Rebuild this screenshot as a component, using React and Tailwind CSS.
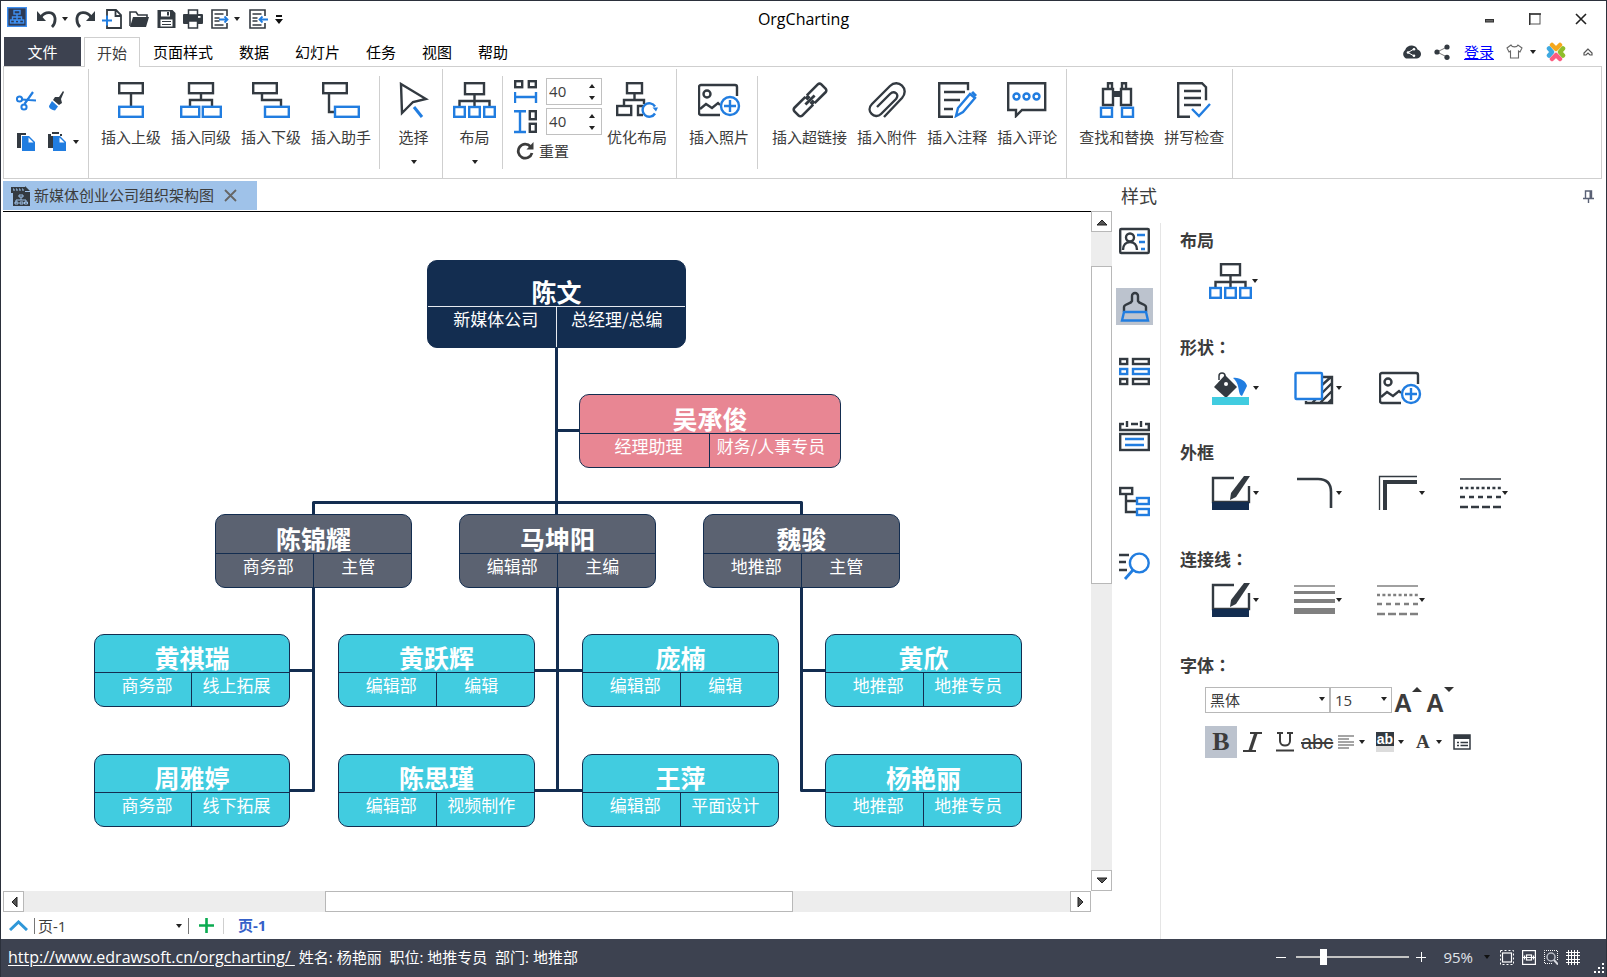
import React from "react";

const D = "#333a41";
const B = "#217de0";

function Svg({ w, h, children, sw = 2.4, stroke = D, className = "" }) {
  return (
    <svg
      width={w}
      height={h}
      viewBox={`0 0 ${w} ${h}`}
      fill="none"
      stroke={stroke}
      strokeWidth={sw}
      className={`block shrink-0 ${className}`}
      aria-hidden="true"
    >
      {children}
    </svg>
  );
}

function Caret({ color = "#222", className = "" }) {
  return (
    <svg width="6" height="4" viewBox="0 0 6 4" className={`block shrink-0 ${className}`} aria-hidden="true">
      <path d="M0 0h6L3 4z" fill={color} />
    </svg>
  );
}

/* ---------- quick access icons ---------- */

const LogoIcon = () => (
  <Svg w={20} h={20} sw={1.4} stroke="#3f8ff0">
    <rect x="0" y="0" width="20" height="20" fill="#2d3a55" stroke="none" />
    <rect x="0.7" y="0.7" width="18.6" height="18.6" />
    <rect x="7" y="3.5" width="6" height="3.5" />
    <path d="M10 7v7M5.5 13v-3h9v3" />
    <rect x="3.5" y="13" width="4" height="3" />
    <rect x="8.3" y="13" width="3.4" height="3" />
    <rect x="12.6" y="13" width="4" height="3" />
  </Svg>
);
const UndoIcon = () => (
  <Svg w={20} h={20}>
    <path d="M4 8c4-6 13-6 14 1 .4 4-1 7-3 9" strokeWidth="2.8" />
    <path d="M0 2v10h9z" fill={D} stroke="none" />
  </Svg>
);
const RedoIcon = () => (
  <Svg w={20} h={20}>
    <path d="M16 8C12 2 3 2 2 9c-.4 4 1 7 3 9" strokeWidth="2.8" />
    <path d="M20 2v10h-9z" fill={D} stroke="none" />
  </Svg>
);
const NewIcon = () => (
  <Svg w={20} h={20} sw={1.8}>
    <path d="M5 7V1h9l5 5v13H5v-4M13.500 1v6H19" />
    <path d="M0 11.500h10M5 6.500v10" stroke={B} strokeWidth="2" />
  </Svg>
);
const OpenIcon = () => (
  <Svg w={20} h={20}>
    <path d="M1 17V3h6l2 3h9v3" strokeWidth="1.600" />
    <path d="M4 8h16l-3 10H1z" fill={D} stroke="none" />
  </Svg>
);
const SaveIcon = () => (
  <Svg w={20} h={20}>
    <path d="M1.500 1h15l3 3v15h-18z" fill={D} stroke="none" />
    <rect x="5" y="2.500" width="9" height="5" fill="#fff" stroke="none" />
    <rect x="11" y="3" width="2" height="3.500" fill={D} stroke="none" />
    <rect x="4.500" y="10.500" width="12" height="7" fill="#fff" stroke="none" />
    <path d="M6 12.500h9M6 15.500h9" strokeWidth="1.200" />
  </Svg>
);
const PrintIcon = () => (
  <Svg w={20} h={20}>
    <rect x="0" y="5" width="20" height="10" rx="1" fill={D} stroke="none" />
    <rect x="5.500" y="1" width="9" height="5" fill="#fff" strokeWidth="1.500" />
    <rect x="5.500" y="12" width="9" height="7" fill="#fff" strokeWidth="1.500" />
    <rect x="15" y="7" width="2.500" height="1.800" fill="#fff" stroke="none" />
  </Svg>
);
const ExportIcon = ({ back }) => (
  <Svg w={20} h={20} sw={1.6}>
    <path d="M17 7V1H2v18h15v-5" />
    <path d="M4.500 5h9M4.500 9h5M4.500 12h5M4.500 16h9" strokeWidth="1.300" />
    <path d={back ? "M20 10.500h-8M14.500 7.500l-3 3 3 3" : "M9 10.500h8M14.500 7.500l3 3-3 3"} stroke={B} strokeWidth="1.800" />
  </Svg>
);

/* ---------- clipboard icons ---------- */

const CutIcon = () => (
  <Svg w={20} h={20} stroke={B} sw={2}>
    <circle cx="3.500" cy="8" r="2.600" />
    <circle cx="8" cy="16" r="2.600" />
    <path d="M6 8.500L20 9.500M8.500 13L17 1" strokeWidth="2.200" />
  </Svg>
);
const BrushIcon = () => (
  <Svg w={20} h={20} stroke="none">
    <path d="M16 0l1 1-3 7 1 4-3 2-6-5 2-3 4 0z" fill={D} />
    <path d="M5 10l6 5.500-3 4c-3-.5-6-2-6-4.500z" fill={B} />
  </Svg>
);
const CopyIcon = () => (
  <Svg w={20} h={20} stroke="none">
    <path d="M1 1h9v2H5v13H1z" fill={D} />
    <path d="M6 4h7l6 6v9H6z" fill={B} />
    <path d="M12.500 5.500v5h5z" fill="#fff" />
  </Svg>
);
const PasteIcon = () => (
  <Svg w={20} h={20} stroke="none">
    <path d="M1 2h3v2h2v12H1zM5 0h7v2H5zM13 2h2v2h-2z" fill={D} />
    <path d="M6 4h7l6 6v9H6z" fill={B} />
    <path d="M12.500 5.500v5h5z" fill="#fff" />
  </Svg>
);

/* ---------- ribbon icons ---------- */

const ParentIcon = () => (
  <Svg w={26} h={36}>
    <rect x="1.200" y="1.200" width="23.600" height="10" />
    <path d="M13 11v13" />
    <rect x="1.200" y="24.800" width="23.600" height="10" stroke={B} />
  </Svg>
);
const SiblingIcon = () => (
  <Svg w={42} h={36}>
    <rect x="9" y="1.200" width="24" height="10" />
    <path d="M21 11v7M10 24v-6h22v6" />
    <rect x="1.200" y="24.800" width="18" height="10" stroke={B} />
    <rect x="22.800" y="24.800" width="18" height="10" stroke={B} />
  </Svg>
);
const ChildIcon = () => (
  <Svg w={38} h={36}>
    <rect x="1.200" y="1.200" width="23.600" height="10" />
    <path d="M10 11v7h19v6" />
    <rect x="13" y="24.800" width="23.800" height="10" stroke={B} />
  </Svg>
);
const AssistantIcon = () => (
  <Svg w={38} h={36}>
    <rect x="1.200" y="1.200" width="23.600" height="10" />
    <path d="M7 11v19h7" />
    <rect x="13" y="24.800" width="23.800" height="10" stroke={B} />
  </Svg>
);
const SelectIcon = () => (
  <Svg w={30} h={36}>
    <path d="M2 2l25 15-13 3L3 31z" />
    <path d="M15 25l8 10" stroke={B} strokeWidth="3" />
  </Svg>
);
const LayoutIcon = () => (
  <Svg w={43} h={36}>
    <rect x="12" y="1.200" width="19" height="11" />
    <path d="M21.500 12v12M6.500 24v-5h30v5" />
    <rect x="1.200" y="25" width="10.600" height="9.800" stroke={B} />
    <rect x="16.200" y="25" width="10.600" height="9.800" stroke={B} />
    <rect x="31.200" y="25" width="10.600" height="9.800" stroke={B} />
  </Svg>
);
const HSpaceIcon = () => (
  <Svg w={24} h={24}>
    <rect x="1.200" y="1.200" width="7" height="6" />
    <rect x="14.800" y="1.200" width="7" height="6" />
    <path d="M1 12v11M22 12v11M1 17h21" stroke={B} />
  </Svg>
);
const VSpaceIcon = () => (
  <Svg w={24} h={24}>
    <rect x="15.800" y="1.200" width="6" height="8" />
    <rect x="15.800" y="13.800" width="6" height="8" />
    <path d="M0 1.200h12M0 22h12M6 1v21" stroke={B} />
  </Svg>
);
const ResetIcon = () => (
  <Svg w={18} h={18} sw={2.8} stroke="#3c3c3c">
    <path d="M14.500 4.500A7 7 0 1 0 16 11" />
    <path d="M17.500 0v7.500h-7z" fill="#3c3c3c" stroke="none" />
  </Svg>
);
const OptimizeIcon = () => (
  <Svg w={42} h={36}>
    <rect x="11" y="1.200" width="15" height="10" />
    <path d="M18.500 11v7M8 24v-6h20v4" />
    <rect x="1.200" y="24" width="14" height="9" />
    <path d="M28 24h-6v9h5" />
    <path d="M39 24.500a6.700 6.700 0 1 0 0 7" stroke={B} />
    <path d="M36.500 25.500h5.500l-2 4z" fill={B} stroke="none" />
  </Svg>
);
const PhotoIcon = () => (
  <Svg w={43} h={36}>
    <path d="M22 33H3a2 2 0 0 1-2-2V5a2 2 0 0 1 2-2h34a2 2 0 0 1 2 2v9" />
    <circle cx="9" cy="12" r="3.500" />
    <path d="M2 27l6-5 6 4 6-5 2 2" />
    <circle cx="32" cy="24" r="9" stroke={B} />
    <path d="M26 24h12M32 18v12" stroke={B} />
  </Svg>
);
const LinkIcon = () => (
  <Svg w={36} h={36} sw={2.6}>
    <g transform="rotate(-45 18 18)">
      <path d="M17 12.500H1.500a2.500 2.500 0 0 0-2.500 2.500v6a2.500 2.500 0 0 0 2.500 2.500H17M17 12.500v4M17 23.500v-4" />
      <path d="M19 12.500h15.500a2.500 2.500 0 0 1 2.500 2.500v6a2.500 2.500 0 0 1-2.500 2.500H19M19 12.500v4M19 23.500v-4" />
      <path d="M11.500 18h13" strokeWidth="2.800" />
    </g>
  </Svg>
);
const ClipIcon = () => (
  <Svg w={38} h={36}>
    <path d="M16 35L34 16c8-9-4-20-12-12L4 22c-7 7 3 16 9 10l15-15c4-5-2-9-6-5L9 25" />
  </Svg>
);
const NoteIcon = () => (
  <Svg w={39} h={36}>
    <path d="M15 34.800H1.200V1.200H30v7M6 10h21M6 18h16M6 27h9" />
    <path d="M18 34l2-8 12-14 5 4-12 14z" stroke={B} />
    <path d="M34 10l4 4" stroke={B} strokeWidth="3" />
  </Svg>
);
const CommentIcon = () => (
  <Svg w={40} h={36}>
    <path d="M1.200 1.200h37V28H15l-6 6v-6H1.200z" />
    <g stroke={B}>
      <circle cx="9.500" cy="14.500" r="3" />
      <circle cx="19.500" cy="14.500" r="3" />
      <circle cx="29.500" cy="14.500" r="3" />
    </g>
  </Svg>
);
const FindIcon = () => (
  <Svg w={36} h={36}>
    <path d="M4 7h10v16H4zM22 7h10v16H22zM9 7V1.200h4V7M23 7V1.200h4V7" />
    <rect x="14" y="9" width="8" height="6" fill={D} stroke="none" />
    <rect x="2" y="25.800" width="11" height="9" stroke={B} />
    <rect x="23" y="25.800" width="11" height="9" stroke={B} />
  </Svg>
);
const SpellIcon = () => (
  <Svg w={34} h={36}>
    <path d="M13 34.800H1.200V1.200H25l4 4v13M7 9h17M7 16h17M7 23h17" />
    <path d="M15 27l7 7 11-12" stroke={B} />
  </Svg>
);

/* ---------- style panel icons ---------- */

const CardIcon = () => (
  <Svg w={31} h={31}>
    <rect x="1.200" y="3" width="28.600" height="24" rx="1" />
    <circle cx="11" cy="11.500" r="4" />
    <path d="M4 24c0-5 3-8 7-8s7 3 7 8" />
    <path d="M18 9h8M20 16h6M22 23h4" stroke={B} />
  </Svg>
);
const StyleBrushIcon = () => (
  <Svg w={31} h={31}>
    <path d="M5 21v-5c0-3 7-3 8-6V5a3 3 0 0 1 6 0v5c1 3 8 3 8 6v5" />
    <path d="M5 21h22l2 8.500H3z" stroke={B} />
  </Svg>
);
const ListIcon = () => (
  <Svg w={31} h={31}>
    <rect x="1.200" y="3" width="7" height="5" />
    <rect x="14" y="3" width="15.800" height="5" />
    <rect x="1.200" y="13" width="7" height="5" stroke={B} />
    <rect x="14" y="13" width="15.800" height="5" stroke={B} />
    <rect x="1.200" y="23" width="7" height="5" />
    <rect x="14" y="23" width="15.800" height="5" />
  </Svg>
);
const CalendarIcon = () => (
  <Svg w={31} h={31}>
    <path d="M5 3H1.200v6h28.600V3H26M12 3h7M8 0v6M22 0v6" />
    <rect x="1.200" y="13" width="28.600" height="16" />
    <path d="M6 18h19M6 24h19" stroke={B} />
  </Svg>
);
const TreeIcon = () => (
  <Svg w={31} h={31}>
    <rect x="1.200" y="2" width="12" height="6" />
    <path d="M7 8v18h10M7 15h10" />
    <rect x="18" y="12" width="11.800" height="6" stroke={B} />
    <rect x="18" y="23" width="11.800" height="6" stroke={B} />
  </Svg>
);
const SearchListIcon = () => (
  <Svg w={31} h={31}>
    <path d="M0 4h10M0 11h7M0 19h8" />
    <circle cx="20.300" cy="12" r="9.400" stroke={B} />
    <path d="M14 19L6 28" stroke={B} strokeWidth="2.800" />
  </Svg>
);

const BucketIcon = () => (
  <Svg w={44} h={40} stroke="none">
    <path d="M16 7l12 12-11 11L5 19z" fill={D} />
    <path d="M10 12V8a3 3 0 0 1 6 0v8" fill="none" stroke={D} strokeWidth="1.500" />
    <circle cx="17" cy="16" r="2" fill="#fff" />
    <path d="M24 10c6-1 13 3 14 8l-5 10c-5-2-1-11-9-18z" fill={B} />
    <rect x="3" y="29" width="37" height="8" fill="#41cce0" />
  </Svg>
);
const ShadowIcon = () => (
  <Svg w={44} h={40}>
    <path d="M14 33v2h26V9h-9M20 35l20-20M28 35l12-12M30 17l9-8M36 35l4-4" />
    <rect x="3.500" y="5" width="26.500" height="26" rx="1" stroke={B} fill="#fff" />
  </Svg>
);
const PenIcon = () => (
  <Svg w={44} h={40}>
    <path d="M25 5H4v24h36V13" />
    <path d="M35 3h6L27 24l-6 3 1-7z" fill={D} stroke="none" />
    <rect x="3" y="29" width="37" height="8" fill="#132d50" stroke="none" />
  </Svg>
);
const CornerIcon = () => (
  <Svg w={44} h={40}>
    <path d="M5 6h21q13 0 13 13v16" strokeWidth="2.600" />
  </Svg>
);
const CompoundIcon = () => (
  <Svg w={44} h={40}>
    <path d="M4.500 37V3.500H42" strokeWidth="1.300" />
    <path d="M10 37V9h32" strokeWidth="4" />
  </Svg>
);
const DashIcon = ({ color = D }) => (
  <Svg w={44} h={40} stroke={color}>
    <path d="M2 6h41" strokeWidth="1.500" />
    <path d="M2 15h41" strokeDasharray="3 2.400" strokeWidth="2.600" />
    <path d="M2 24h41" strokeDasharray="5 4" strokeWidth="2.600" />
    <path d="M2 34h41" strokeDasharray="8 3" strokeWidth="2.600" />
  </Svg>
);
const WeightIcon = () => (
  <Svg w={44} h={40} stroke="#808080">
    <path d="M2 6h41" strokeWidth="1.500" />
    <path d="M2 12.500h41" strokeWidth="3" />
    <path d="M2 21h41" strokeWidth="4" />
    <path d="M2 31h41" strokeWidth="6" />
  </Svg>
);

/* ---------- shell ---------- */

function IconButton({ label, className = "", children }) {
  return (
    <button type="button" aria-label={label} className={`flex shrink-0 items-center justify-center ${className}`}>
      {children}
    </button>
  );
}

function TitleBar() {
  return (
    <header className="grid h-9 grid-cols-[1fr_auto_1fr]">
      <div className="flex items-center gap-[7px] pl-1.5">
        <div className="mr-[3px] -mt-1"><LogoIcon /></div>
        <IconButton label="撤销" className="gap-[5px]"><UndoIcon /><Caret /></IconButton>
        <IconButton label="恢复"><RedoIcon /></IconButton>
        <IconButton label="新建"><NewIcon /></IconButton>
        <IconButton label="打开"><OpenIcon /></IconButton>
        <IconButton label="保存"><SaveIcon /></IconButton>
        <IconButton label="打印"><PrintIcon /></IconButton>
        <IconButton label="导出" className="gap-1"><ExportIcon /><Caret /></IconButton>
        <IconButton label="导入" className="ml-px"><ExportIcon back /></IconButton>
        <IconButton label="自定义工具栏">
          <svg width="8" height="9" viewBox="0 0 8 9"><path d="M1 0h6v2H1zM0 4h8L4 9z" fill="#111" /></svg>
        </IconButton>
      </div>
      <h1 className="self-center text-[16px] leading-6 text-black">OrgCharting</h1>
      <div className="flex justify-end pr-0.5">
        <IconButton label="最小化" className="w-[46px]">
          <svg width="9" height="4" viewBox="0 0 9 4" className="mt-1"><rect x="0.500" y="0.500" width="8" height="2.500" fill="#666" stroke="#333" /></svg>
        </IconButton>
        <IconButton label="最大化" className="w-[46px]">
          <svg width="12" height="12" viewBox="0 0 12 12" fill="none"><rect x="1" y="1" width="10" height="10" stroke="#555" /><path d="M0.500 0v12M0 1h12" stroke="#333" strokeWidth="1.500" /></svg>
        </IconButton>
        <IconButton label="关闭" className="w-[46px]">
          <svg width="12" height="12" viewBox="0 0 12 12" fill="none"><path d="M1 1l10 10M11 1L1 11" stroke="#222" strokeWidth="1.600" /></svg>
        </IconButton>
      </div>
    </header>
  );
}

function TabBar() {
  return (
    <nav className="flex h-[29px] justify-between pl-[3px] pr-[13px] text-[15px] leading-7">
      <div className="flex">
        <button type="button" className="mr-[3px] w-[77px] bg-[#3d4250] text-white">文件</button>
        <button type="button" className="relative z-10 -mb-px border border-b-0 border-[#cfcfcf] bg-white px-3 text-[#3c3c3c]">开始</button>
        {["页面样式", "数据", "幻灯片", "任务", "视图", "帮助"].map((t) => (
          <button type="button" key={t} className="px-[13px] text-black">{t}</button>
        ))}
      </div>
      <div className="flex items-center">
        <IconButton label="云分享" className="mr-[13px]">
          <Svg w={20} h={14} stroke="none">
            <path d="M5 13.500a5 5 0 0 1-.8-8.500C5 2 8 .3 11 .5s5 1.800 5.500 4c5 1.500 4.500 8.500-.5 9z" fill={D} />
            <path d="M13 4L7 7.500l6 3.500" fill="none" stroke="#fff" strokeWidth="1" />
            <circle cx="13" cy="4.300" r="1.300" fill="#fff" /><circle cx="7" cy="7.500" r="1.300" fill="#fff" /><circle cx="13" cy="10.700" r="1.300" fill="#fff" />
          </Svg>
        </IconButton>
        <IconButton label="分享" className="mr-3.5">
          <Svg w={16} h={16} sw={1} stroke="#777">
            <path d="M13 3L3 8l10 5" />
            <circle cx="13" cy="3" r="2.600" fill={D} stroke="none" /><circle cx="3" cy="8" r="2.600" fill={D} stroke="none" /><circle cx="13" cy="13.300" r="2.600" fill={D} stroke="none" />
          </Svg>
        </IconButton>
        <a href="#login" className="mr-3 text-[#0000ff] underline">登录</a>
        <IconButton label="皮肤" className="mr-2.5 gap-[7px]">
          <Svg w={17} h={15} sw={1.1} stroke="#666">
            <path d="M5 1L1 4l2 4 1.500-1v7h8V7L14 8l2-4-4-3c-1 2.500-6 2.500-7 0z" />
          </Svg>
          <Caret />
        </IconButton>
        <IconButton label="产品" className="mr-[17px]">
          <svg width="20" height="20" viewBox="0 0 20 20" fill="none" strokeWidth="4.500" strokeLinecap="round" strokeLinejoin="round">
            <path d="M6 3l4 4 4-4" stroke="#f5a81c" />
            <path d="M3 6.500L6 10l-3 3.500" stroke="#3fa9e0" />
            <path d="M17 6.500L14 10l3 3.500" stroke="#8fbe2c" />
            <path d="M6 17l4-4 4 4" stroke="#fb5c80" />
          </svg>
        </IconButton>
        <IconButton label="折叠功能区">
          <Svg w={10} h={8} sw={1.2} stroke="#555"><path d="M5 1L1 5v2h2l2-2 2 2h2V5z" /></Svg>
        </IconButton>
      </div>
    </nav>
  );
}

function RibbonButton({ icon, label, menu }) {
  return (
    <button
      type="button"
      className={`flex h-full flex-col items-center pt-[13px] text-[15px] leading-[22px] text-[#3c3c3c] ${menu ? "w-[49px]" : "px-[5px]"}`}
    >
      {icon}
      <span className="mt-2 whitespace-nowrap">{label}</span>
      {menu && <Caret className="mt-3" />}
    </button>
  );
}

const FullRule = () => <div className="w-px self-stretch bg-[#cfcfcf]" />;
const ShortRule = () => <div className="mb-[9px] mt-[7px] w-px self-stretch bg-[#cfcfcf]" />;
const Group = ({ wide, children }) => <div className={`flex ${wide ? "pl-[9px] pr-1" : "pl-[7px] pr-[3px]"}`}>{children}</div>;

function Spinner({ id, label, icon }) {
  return (
    <div className="flex items-center gap-2">
      <label htmlFor={id} aria-label={label}>{icon}</label>
      <div className="flex h-[27px] w-14 items-center border border-[#c0c0c0] pr-1.5">
        <input id={id} defaultValue="40" className="w-full min-w-0 bg-transparent pl-0.5 text-[15px] text-[#3c3c3c] outline-none" />
        <div className="flex flex-col gap-2">
          <button type="button" aria-label={`${label}增加`}><Caret className="rotate-180" /></button>
          <button type="button" aria-label={`${label}减少`}><Caret /></button>
        </div>
      </div>
    </div>
  );
}

function Ribbon() {
  return (
    <section className="ml-0.5 mr-1 flex h-[113px] overflow-hidden border border-[#cfcfcf] pt-0.5">
      <div className="flex w-[84px] flex-col gap-[21px] pl-3 pt-[22px]">
        <div className="flex gap-[11px]">
          <IconButton label="剪切"><CutIcon /></IconButton>
          <IconButton label="格式刷"><BrushIcon /></IconButton>
        </div>
        <div className="flex gap-[11px]">
          <IconButton label="复制"><CopyIcon /></IconButton>
          <IconButton label="粘贴" className="gap-1.5"><PasteIcon /><Caret /></IconButton>
        </div>
      </div>
      <FullRule />
      <Group>
        <RibbonButton icon={<ParentIcon />} label="插入上级" />
        <RibbonButton icon={<SiblingIcon />} label="插入同级" />
        <RibbonButton icon={<ChildIcon />} label="插入下级" />
        <RibbonButton icon={<AssistantIcon />} label="插入助手" />
      </Group>
      <ShortRule />
      <Group wide><RibbonButton icon={<SelectIcon />} label="选择" menu /></Group>
      <FullRule />
      <Group><RibbonButton icon={<LayoutIcon />} label="布局" menu /></Group>
      <ShortRule />
      <div className="flex flex-col gap-[3px] pl-[11px] pt-[9px]">
        <Spinner id="h-space" label="水平间距" icon={<HSpaceIcon />} />
        <Spinner id="v-space" label="垂直间距" icon={<VSpaceIcon />} />
        <button type="button" className="mt-0.5 flex items-center gap-[5px] pl-0.5 text-[15px] leading-[22px] text-[#3c3c3c]">
          <ResetIcon />重置
        </button>
      </div>
      <div className="pr-1"><RibbonButton icon={<OptimizeIcon />} label="优化布局" /></div>
      <FullRule />
      <Group><RibbonButton icon={<PhotoIcon />} label="插入照片" /></Group>
      <ShortRule />
      <Group wide>
        <RibbonButton icon={<LinkIcon />} label="插入超链接" />
        <RibbonButton icon={<ClipIcon />} label="插入附件" />
        <RibbonButton icon={<NoteIcon />} label="插入注释" />
        <RibbonButton icon={<CommentIcon />} label="插入评论" />
      </Group>
      <FullRule />
      <Group>
        <RibbonButton icon={<FindIcon />} label="查找和替换" />
        <RibbonButton icon={<SpellIcon />} label="拼写检查" />
      </Group>
      <FullRule />
    </section>
  );
}

/* ---------- chart ---------- */

const tones = {
  root: { box: "border-[#132d50] bg-[#132d50]", line: "border-[#e6eaf0]", foot: "h-[41px]" },
  aide: { box: "border-[#132d50] bg-[#e88693]", line: "border-[#132d50]", foot: "h-[34px]" },
  lead: { box: "border-[#132d50] bg-[#5b6271]", line: "border-[#132d50]", foot: "h-[34px]" },
  team: { box: "border-[#132d50] bg-[#41cce0]", line: "border-[#132d50]", foot: "h-[34px]" },
};

const nodes = [
  { n: "陈文", d: "新媒体公司", r: "总经理/总编", x: 424, y: 48, w: 259, h: 88, t: "root" },
  { n: "吴承俊", d: "经理助理", r: "财务/人事专员", x: 576, y: 182, w: 262, h: 74, t: "aide" },
  { n: "陈锦耀", d: "商务部", r: "主管", x: 212, y: 302, w: 197, h: 74, t: "lead" },
  { n: "马坤阳", d: "编辑部", r: "主编", x: 456, y: 302, w: 197, h: 74, t: "lead" },
  { n: "魏骏", d: "地推部", r: "主管", x: 700, y: 302, w: 197, h: 74, t: "lead" },
  { n: "黄祺瑞", d: "商务部", r: "线上拓展", x: 91, y: 422, w: 196, h: 73, t: "team" },
  { n: "黄跃辉", d: "编辑部", r: "编辑", x: 335, y: 422, w: 197, h: 73, t: "team" },
  { n: "庞楠", d: "编辑部", r: "编辑", x: 579, y: 422, w: 197, h: 73, t: "team" },
  { n: "黄欣", d: "地推部", r: "地推专员", x: 822, y: 422, w: 197, h: 73, t: "team" },
  { n: "周雅婷", d: "商务部", r: "线下拓展", x: 91, y: 542, w: 196, h: 73, t: "team" },
  { n: "陈思瑾", d: "编辑部", r: "视频制作", x: 335, y: 542, w: 197, h: 73, t: "team" },
  { n: "王萍", d: "编辑部", r: "平面设计", x: 579, y: 542, w: 197, h: 73, t: "team" },
  { n: "杨艳丽", d: "地推部", r: "地推专员", x: 822, y: 542, w: 197, h: 73, t: "team" },
];

function Node({ node }) {
  const tone = tones[node.t];
  return (
    <div
      className={`absolute flex flex-col overflow-hidden rounded-[10px] border text-white ${tone.box}`}
      style={{ left: node.x, top: node.y, width: node.w, height: node.h }}
    >
      <div className="flex flex-1 items-end justify-center text-[25px] font-bold leading-[30px]">{node.n}</div>
      <div className={`grid grid-cols-2 border-t text-center text-[17px] leading-[23px] ${tone.line} ${tone.foot}`}>
        <div className={`whitespace-nowrap border-r pl-2 ${tone.line}`}>{node.d}</div>
        <div className="whitespace-nowrap pr-2">{node.r}</div>
      </div>
    </div>
  );
}

function Canvas() {
  return (
    <div className="relative ml-0.5 min-h-[640px] min-w-0 flex-1 overflow-hidden border-t border-black font-['Noto_Sans_CJK_SC',sans-serif]">
      <svg className="absolute left-0 top-0" width="1090" height="640" fill="none" stroke="#132d50" strokeWidth="3" strokeLinejoin="round">
        <path d="M553.500 136V302M553.500 218.500H576M310.500 302V290.500H798.500V302" />
        <path d="M287 458.500H310.500M287 578.500H310.500V376" />
        <path d="M532 458.500H579M532 578.500H579M554.500 376V578.500" />
        <path d="M822 458.500H798.500M822 578.500H798.500V376" />
      </svg>
      {nodes.map((node) => <Node key={node.n} node={node} />)}
    </div>
  );
}

function ScrollArrow({ label, dir }) {
  const paths = { up: "M0 8L5 3l5 5z", down: "M0 2h10L5 7z", left: "M8 0v10L3 5z", right: "M2 0v10l5-5z" };
  return (
    <button type="button" aria-label={label} className="flex size-[21px] shrink-0 items-center justify-center border border-[#b8b8b8] bg-white">
      <svg width="10" height="10" viewBox="0 0 10 10"><path d={paths[dir]} fill="#555" stroke="#222" /></svg>
    </button>
  );
}

function Workspace() {
  return (
    <div className="flex min-w-0 flex-1 flex-col">
      <div className="ml-0.5 flex">
        <div className="flex h-[29px] items-center bg-[#9fc2e9] pl-2 pr-5 text-[15px] text-[#3c3c3c]">
          <Svg w={20} h={20} stroke="none">
            <path d="M2 6h17v14H2z" fill={D} /><path d="M0 1h14v6H0z" fill={D} /><path d="M14 0l5 5h-5z" fill={D} />
            <path d="M2 3h1v2M5 3h1v2M8 3h1v2M11 3h1v2" stroke="#9fc2e9" strokeWidth="1" />
            <path d="M8 9h4v2H8zM10 11v3M5 17v-3h10v3M4 16h3v2H4zM9 16h3v2H9zM13.500 16h3v2h-3z" fill="none" stroke="#9fc2e9" strokeWidth="1" />
          </Svg>
          <span className="ml-[3px]">新媒体创业公司组织架构图</span>
          <IconButton label="关闭标签" className="ml-2.5">
            <svg width="13" height="13" viewBox="0 0 13 13"><path d="M1 1l11 11M12 1L1 12" stroke="#666" strokeWidth="1.800" /></svg>
          </IconButton>
        </div>
      </div>
      <div className="mt-px flex flex-1">
        <Canvas />
        <div className="flex w-[21px] flex-col bg-[#ededed]">
          <ScrollArrow label="向上滚动" dir="up" />
          <div className="basis-[34px]" />
          <div className="h-1/2 max-h-[318px] border border-[#b8b8b8] bg-white" />
          <div className="flex-1" />
          <ScrollArrow label="向下滚动" dir="down" />
        </div>
      </div>
      <div className="ml-0.5 mr-[21px] flex h-[21px] bg-[#ededed]">
        <ScrollArrow label="向左滚动" dir="left" />
        <div className="basis-[301px]" />
        <div className="w-[43%] border border-[#b8b8b8] bg-white" />
        <div className="flex-1" />
        <ScrollArrow label="向右滚动" dir="right" />
      </div>
      <div className="flex h-[27px] items-center pl-2 text-[15px]">
        <IconButton label="展开页面列表"><Svg w={19} h={11} stroke="#2f97d8" sw={3}><path d="M1 10l8.500-8 8.500 8" /></Svg></IconButton>
        <div className="relative ml-1.5 w-[155px] border-x border-[#777] leading-4">
          <select aria-label="页面" className="w-full appearance-none bg-transparent pl-[3px] text-[#3c3c3c] outline-none"><option>页-1</option></select>
          <Caret className="pointer-events-none absolute right-1.5 top-1.5" />
        </div>
        <IconButton label="添加页面" className="ml-[9px]"><Svg w={17} h={17} stroke="#0bab50" sw={2.6}><path d="M8.500 1v15M1 8.500h15" /></Svg></IconButton>
        <div className="ml-2 h-4 w-px bg-[#cfcfcf]" />
        <button type="button" className="ml-3.5 font-bold text-[#3560c8]">页-1</button>
      </div>
    </div>
  );
}

/* ---------- style panel ---------- */

function Section({ title, colon, children }) {
  return (
    <section className="h-[106px] pt-1.5">
      <h3 className="pl-5 text-[17px] font-bold leading-6 text-[#3c3c3c]">
        {title}{colon && <span className="font-['Noto_Sans_CJK_TC',sans-serif]">：</span>}
      </h3>
      {children}
    </section>
  );
}

function Tools({ items }) {
  return (
    <div className="mt-2 flex pl-[49px]">
      {items.map(([label, icon, menu]) => (
        <button type="button" key={label} aria-label={label} className="flex h-10 w-[83px] items-center">
          {icon}
          {menu && <Caret />}
        </button>
      ))}
    </div>
  );
}

function Combo({ label, value, className }) {
  return (
    <div className={`relative ${className}`}>
      <select aria-label={label} className="h-[26px] w-full appearance-none border border-[#b8b8b8] bg-white pl-1 text-[15px] text-[#3c3c3c] outline-none">
        <option>{value}</option>
      </select>
      <Caret className="pointer-events-none absolute right-[5px] top-2.5" />
    </div>
  );
}

function StylePanel() {
  const tabs = [
    ["数据", <CardIcon />], ["样式", <StyleBrushIcon />], ["列表", <ListIcon />],
    ["日程", <CalendarIcon />], ["结构", <TreeIcon />], ["搜索", <SearchListIcon />],
  ];
  return (
    <aside className="flex w-[494px] shrink-0 flex-col">
      <div className="flex h-[42px] items-start justify-between pl-[9px] pr-3">
        <h2 className="text-[18px] leading-[30px] text-[#3c3c3c]">样式</h2>
        <IconButton label="固定面板" className="mt-[9px]">
          <Svg w={11} h={13} sw={1.4} stroke="#5a6175"><path d="M2.500 8V1h6v7M0 8.500h11M5.500 9v4" /><path d="M7.500 1v7" strokeWidth="2" /></Svg>
        </IconButton>
      </div>
      <div className="flex flex-1">
        <div className="flex w-[49px] flex-col gap-7 border-r border-[#e5e5e5] pl-1">
          {tabs.map(([label, icon]) => (
            <button
              type="button"
              key={label}
              aria-label={label}
              className={`flex size-[37px] items-center justify-center ${label === "样式" ? "bg-[#bcc3ce]" : ""}`}
            >
              {icon}
            </button>
          ))}
        </div>
        <div className="-ml-px min-w-0 flex-1">
          <Section title="布局"><Tools items={[["布局", <LayoutIcon />, true]]} /></Section>
          <Section title="形状" colon>
            <Tools items={[["填充", <BucketIcon />, true], ["阴影", <ShadowIcon />, true], ["图片", <span className="ml-1"><PhotoIcon /></span>, false]]} />
          </Section>
          <Section title="外框">
            <Tools items={[["颜色", <PenIcon />, true], ["圆角", <CornerIcon />, true], ["复合线", <CompoundIcon />, true], ["虚线", <DashIcon />, true]]} />
          </Section>
          <Section title="连接线" colon>
            <Tools items={[["颜色", <PenIcon />, true], ["粗细", <WeightIcon />, true], ["虚线", <DashIcon color="#808080" />, true]]} />
          </Section>
          <Section title="字体" colon>
            <div className="mt-[9px] flex pl-[45px]">
              <Combo label="字体" value="黑体" className="w-[125px]" />
              <Combo label="字号" value="15" className="w-[62px]" />
              <button type="button" aria-label="增大字号" className="ml-0.5 flex h-[26px] w-8 font-['Liberation_Sans',sans-serif] text-[25px] font-bold leading-8 text-[#3c3c3c]">
                A<svg width="10" height="5" viewBox="0 0 10 5" className="shrink-0"><path d="M5 0l5 5H0z" fill="#333" /></svg>
              </button>
              <button type="button" aria-label="减小字号" className="flex h-[26px] w-8 font-['Liberation_Sans',sans-serif] text-[25px] font-bold leading-8 text-[#3c3c3c]">
                A<svg width="10" height="5" viewBox="0 0 10 5" className="shrink-0"><path d="M0 0h10L5 5z" fill="#333" /></svg>
              </button>
            </div>
            <div className="mt-[13px] flex h-8 items-center pl-[45px] font-['Liberation_Serif',serif] text-[#3c3c3c]">
              <button type="button" aria-label="加粗" className="size-8 bg-[#bcc3ce] text-[26px] font-bold leading-8">B</button>
              <button type="button" aria-label="倾斜" className="flex h-8 w-8 items-center justify-center">
                <Svg w={20} h={20} sw={2} stroke="#3c3c3c"><path d="M7 1h12M0 19h13" /><path d="M13 1L7 19" strokeWidth="3.400" /></Svg>
              </button>
              <button type="button" aria-label="下划线" className="flex h-8 w-8 items-center justify-center">
                <Svg w={18} h={20} sw={2} stroke="#3c3c3c"><path d="M1 1h6M11 1h6M4 1v8c0 6 10 6 10 0V1M0 18.500h18" /></Svg>
              </button>
              <button type="button" aria-label="删除线" className="h-8 w-8 font-['Liberation_Sans',sans-serif] text-[20px] leading-7 line-through">abc</button>
              <IconButton label="对齐" className="ml-[5px] gap-[5px]">
                <Svg w={16} h={14} sw={1.6} stroke="#888"><path d="M0 1h16M0 4h11M0 7h16M0 10h16M0 13h11" /></Svg><Caret />
              </IconButton>
              <IconButton label="突出显示" className="ml-[11px] gap-1">
                <span className="border-b-[6px] border-[#dcdcdc]">
                  <span className="block h-3.5 w-[18px] bg-[#333a41] font-['Liberation_Sans',sans-serif] text-[14px] font-bold leading-[14px] text-white">ab</span>
                </span><Caret />
              </IconButton>
              <IconButton label="字体颜色" className="ml-3 gap-1.5 text-[19px] font-bold">A<Caret /></IconButton>
              <IconButton label="更多" className="ml-[11px]">
                <Svg w={18} h={16} sw={1.5}><rect x="1" y="1" width="16" height="14" /><path d="M1 3h16" strokeWidth="4" /><path d="M4 8.500h2M7.500 8.500H15M4 11.500h2M7.500 11.500H15" /></Svg>
              </IconButton>
            </div>
          </Section>
        </div>
      </div>
    </aside>
  );
}

function StatusBar() {
  return (
    <footer className="flex h-[38px] items-center justify-between bg-[#3d4250] pb-0.5 pl-[7px] pr-0.5 text-[15px] text-white">
      <p className="whitespace-pre">
        <a href="http://www.edrawsoft.cn/orgcharting/" className="mr-1 text-[16px] underline underline-offset-2">http://www.edrawsoft.cn/orgcharting/ </a>
        姓名: 杨艳丽  职位: 地推专员  部门: 地推部
      </p>
      <div className="flex items-center">
        <IconButton label="缩小" className="mr-2.5"><Svg w={10} h={10} sw={1} stroke="#fff"><path d="M0 5.500h10" /></Svg></IconButton>
        <input
          type="range"
          aria-label="缩放"
          min="0"
          max="100"
          defaultValue="22"
          className="h-4 w-[113px] appearance-none bg-transparent [&::-webkit-slider-runnable-track]:h-0.5 [&::-webkit-slider-runnable-track]:bg-[#c4c4c4] [&::-webkit-slider-thumb]:-mt-[7px] [&::-webkit-slider-thumb]:h-4 [&::-webkit-slider-thumb]:w-[7px] [&::-webkit-slider-thumb]:appearance-none [&::-webkit-slider-thumb]:bg-white"
        />
        <IconButton label="放大" className="ml-[7px] mr-[17px]"><Svg w={10} h={10} sw={1} stroke="#fff"><path d="M0 5.500h10M5.500 0v10" /></Svg></IconButton>
        <button type="button" className="flex items-center gap-[11px] text-[#e0e4ea]">95%<Caret color="#111" /></button>
        <div className="ml-2.5 flex gap-2">
          <IconButton label="适合页面">
            <Svg w={14} h={15} sw={1} stroke="#fff"><rect x="0.500" y="0.500" width="13" height="14" strokeDasharray="2 2" /><rect x="2.500" y="3" width="9" height="9" strokeWidth="1.200" /></Svg>
          </IconButton>
          <IconButton label="适合宽度">
            <Svg w={14} h={15} sw={1.2} stroke="#fff"><rect x="0.600" y="0.600" width="12.800" height="13.800" /><rect x="4.500" y="5" width="5" height="5" /><path d="M1 7.500h12M2.500 5.500v4M11.500 5.500v4" /></Svg>
          </IconButton>
          <IconButton label="缩放选区">
            <Svg w={14} h={15} sw={1} stroke="#fff"><path d="M13.500 10V.5H.5v13H9" strokeDasharray="1 1" /><circle cx="7" cy="7" r="4" strokeWidth="1.500" stroke="#b8bcc6" /><path d="M10 10l4 4.500" strokeWidth="2" stroke="#d8dae0" /></Svg>
          </IconButton>
          <IconButton label="网格">
            <Svg w={14} h={15} sw={1} stroke="#fff"><path d="M0 2.500h14M0 5.500h14M0 9.500h14M0 12.500h14M2.500 0v15M5.500 0v15M8.500 0v15M11.500 0v15" /></Svg>
          </IconButton>
        </div>
        <svg width="10" height="10" viewBox="0 0 10 10" className="ml-3.5 mt-[22px]" fill="#fff" aria-hidden="true">
          <path d="M8 0h2v2H8zM4 4h2v2H4zM8 4h2v2H8zM0 8h2v2H0zM4 8h2v2H4zM8 8h2v2H8z" />
        </svg>
      </div>
    </footer>
  );
}

export default function App() {
  return (
    <div className="flex min-h-screen flex-col border border-b-0 border-[#2b303b] bg-white font-['Open_Sans','Noto_Sans_CJK_SC',sans-serif]">
      <TitleBar />
      <TabBar />
      <Ribbon />
      <main className="mt-0.5 flex flex-1">
        <Workspace />
        <StylePanel />
      </main>
      <StatusBar />
    </div>
  );
}
